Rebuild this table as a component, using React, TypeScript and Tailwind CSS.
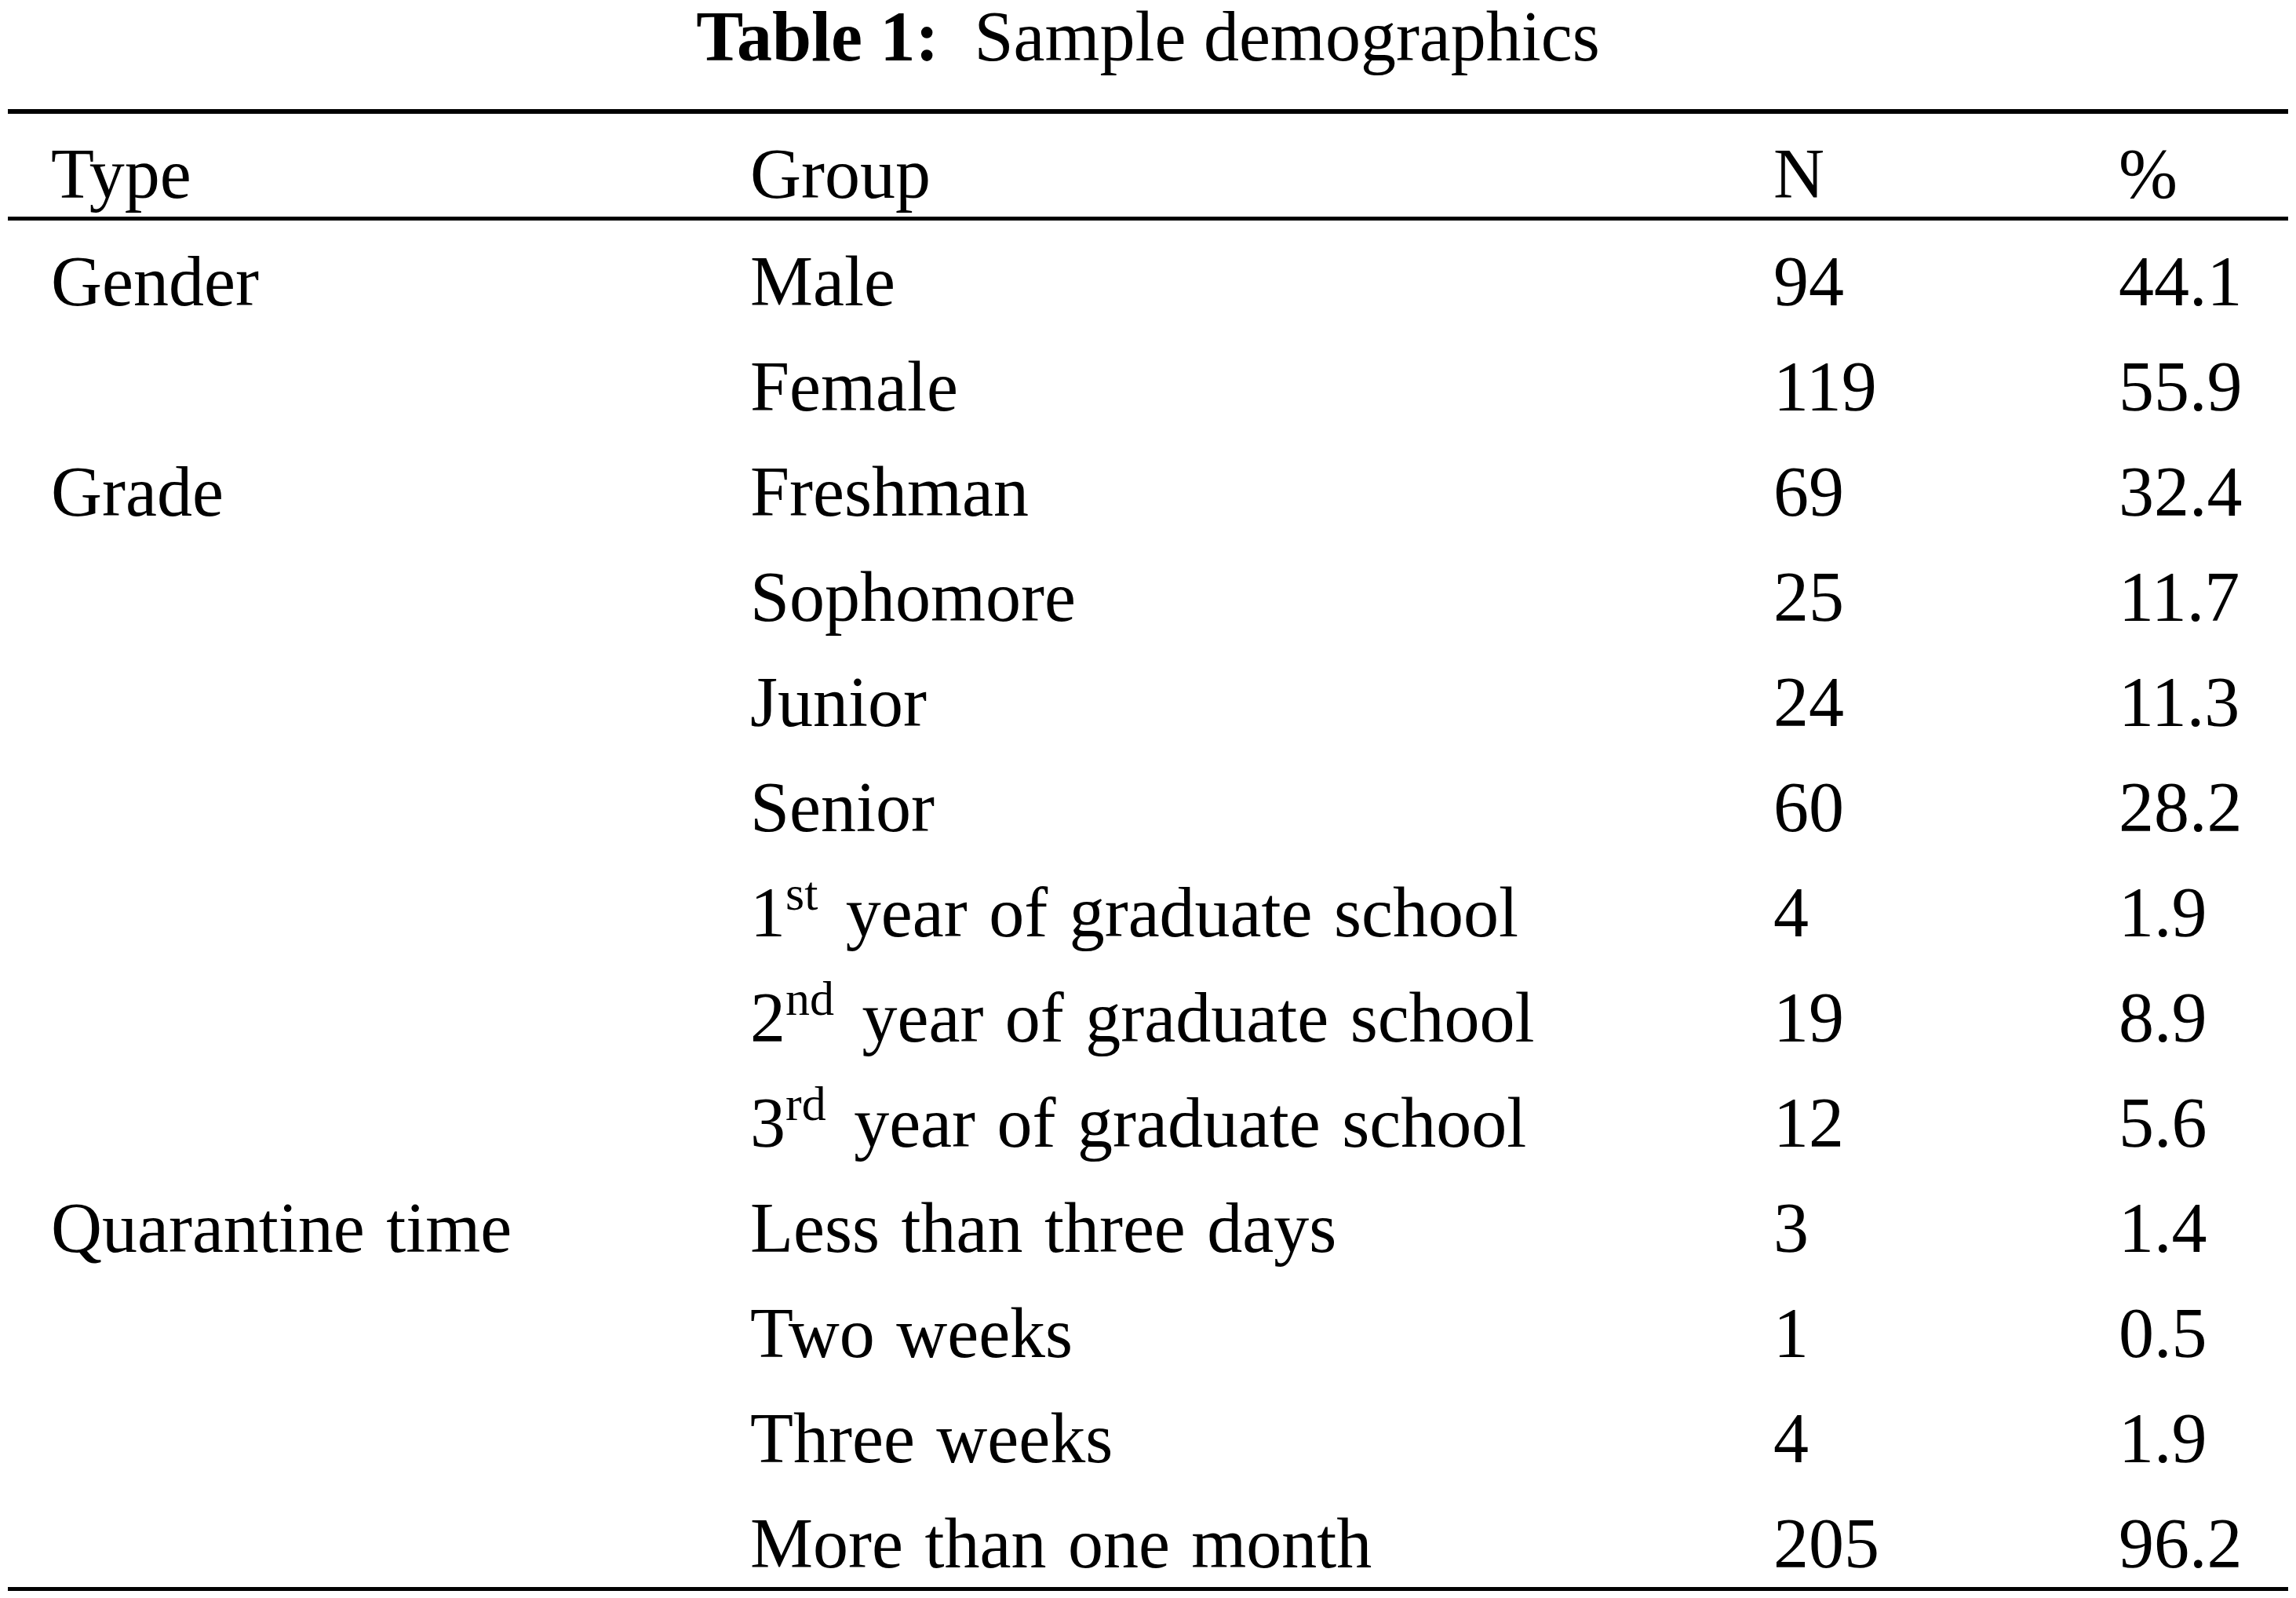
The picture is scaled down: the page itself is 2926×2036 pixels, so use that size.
import React from 'react';

type Row = { type?: string; group: React.ReactNode; n: string; pct: string };

const ord = (num: string, suffix: string, rest: string) => (
  <>
    {num}
    <sup className="text-[62px] top-[-34px] mr-[8px]">{suffix}</sup> {rest}
  </>
);

const rows: Row[] = [
  { type: 'Gender', group: 'Male', n: '94', pct: '44.1' },
  { group: 'Female', n: '119', pct: '55.9' },
  { type: 'Grade', group: 'Freshman', n: '69', pct: '32.4' },
  { group: 'Sophomore', n: '25', pct: '11.7' },
  { group: 'Junior', n: '24', pct: '11.3' },
  { group: 'Senior', n: '60', pct: '28.2' },
  { group: ord('1', 'st', 'year of graduate school'), n: '4', pct: '1.9' },
  { group: ord('2', 'nd', 'year of graduate school'), n: '19', pct: '8.9' },
  { group: ord('3', 'rd', 'year of graduate school'), n: '12', pct: '5.6' },
  { type: 'Quarantine time', group: 'Less than three days', n: '3', pct: '1.4' },
  { group: 'Two weeks', n: '1', pct: '0.5' },
  { group: 'Three weeks', n: '4', pct: '1.9' },
  { group: 'More than one month', n: '205', pct: '96.2' },
];

const cols = 'grid grid-cols-[891px_1304px_440px_1fr] pl-[55px] whitespace-nowrap [word-spacing:5px]';

export default function App() {
  return (
    <div className="min-h-screen bg-white text-black font-['Liberation_Serif','Times_New_Roman',serif] text-[90px]">
      <div className="ml-[10px] w-[2906px]">
        {/* caption */}
        <div className="text-center leading-[94px]">
          <span className="font-bold">Table 1:</span>&nbsp; Sample demographics
        </div>

        <div className="mt-[45px] h-[6px] bg-black" />

        {/* header */}
        <div className={`${cols} pt-[22px] leading-[109px]`}>
          <div>Type</div>
          <div>Group</div>
          <div>N</div>
          <div>%</div>
        </div>

        <div className="h-[5px] bg-black" />

        {/* body */}
        <div className="flex flex-col gap-[23px] pt-[22px]">
          {rows.map((r, i) => (
            <div key={i} className={`${cols} leading-[111px]`}>
              <div>{r.type ?? ''}</div>
              <div>{r.group}</div>
              <div>{r.n}</div>
              <div>{r.pct}</div>
            </div>
          ))}
        </div>

        <div className="h-[5px] bg-black" />
      </div>
    </div>
  );
}
